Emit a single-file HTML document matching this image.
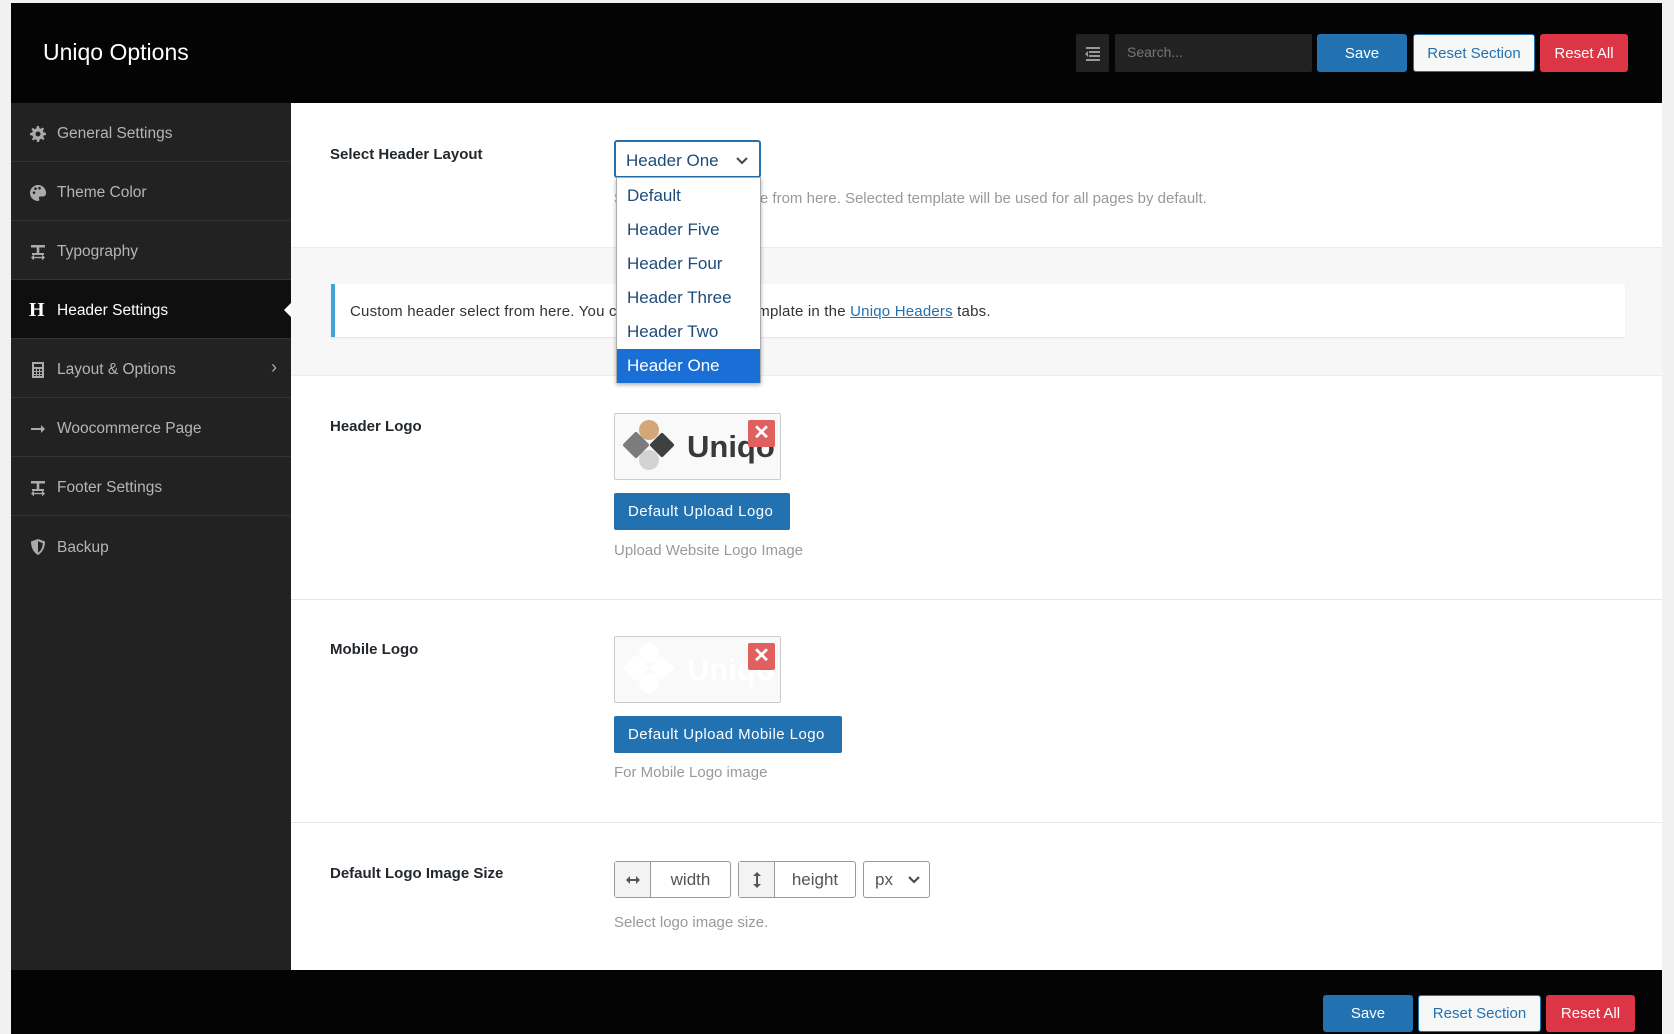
<!DOCTYPE html>
<html><head><meta charset="utf-8"><style>
*{box-sizing:border-box;margin:0;padding:0}
body{width:1674px;height:1034px;background:#f1f1f1;font-family:"Liberation Sans",sans-serif;position:relative;overflow:hidden}
.abs{position:absolute}
.hdr{left:11px;top:3px;width:1651px;height:100px;background:#040404}
.title{left:43px;top:39px;color:#fff;font-size:23px}
.btn{position:absolute;height:37px;border-radius:3px;font-size:15px;display:flex;align-items:center;justify-content:center}
.save{background:#2271b1;color:#fff}
.rs{background:#f6f7f7;color:#2271b1;border:1px solid #2271b1}
.ra{background:#dc3545;color:#fff}
.side{left:11px;top:103px;width:280px;height:867px;background:#222}
.item{position:absolute;left:0;width:280px;height:59px;border-bottom:1px solid #333;color:#b5b5b5;font-size:15.5px;display:flex;align-items:center;padding-left:46px;padding-top:4px}
.item svg{position:absolute;left:19px;top:23px}
.item.act{background:#0f0f0f;color:#fff}
.main{left:291px;top:103px;width:1371px;height:867px;background:#fff}
.lbl{position:absolute;left:330px;font-size:15px;font-weight:bold;color:#23282d}
.help{position:absolute;left:614px;font-size:15px;color:#999}
.sep{position:absolute;left:291px;width:1371px;height:1px;background:#e6e6e6}
.ubtn{position:absolute;left:614px;height:37px;background:#2271b1;color:#fff;font-size:15px;border-radius:2px;display:flex;align-items:center;padding:0 17px 0 14px;letter-spacing:.45px}
.logo{position:absolute;left:614px;width:167px;height:67px;border:1px solid #ccc;border-radius:2px;background:#f9f9f9;overflow:hidden}
.x{position:absolute;left:133px;top:6px;width:27px;height:27px;background:#e06060;border-radius:2px;color:#fff;font-size:20px;font-weight:bold;text-align:center;line-height:27px}
.dd div{height:34px;padding-left:10px;line-height:34px;font-size:17px;color:#1d4b7a}
.ig{position:absolute;top:861px;height:37px;border:1px solid #999;border-radius:3px;display:flex;font-size:17px;color:#555;background:#fff}
.ig .ic{width:36px;background:#f3f3f3;border-right:1px solid #999;display:flex;align-items:center;justify-content:center}
.ig .tx{flex:1;display:flex;align-items:center;justify-content:center}
</style></head><body>
<div class="abs hdr"></div>
<div class="abs title">Uniqo Options</div>
<div class="abs" style="left:1076px;top:34px;width:33px;height:38px;background:#222;border-radius:2px">
<svg width="33" height="38"><g fill="#999"><rect x="10" y="13" width="14" height="2"/><rect x="13" y="17" width="11" height="2"/><rect x="13" y="21" width="11" height="2"/><rect x="10" y="25" width="14" height="2"/><path d="M12 17v6l-3-3z"/></g></svg></div>
<div class="abs" style="left:1115px;top:34px;width:197px;height:38px;background:#222;border-radius:2px;color:#777;font-size:14px;padding:10px 12px">Search...</div>
<div class="btn save" style="left:1317px;top:34px;width:90px;height:38px">Save</div>
<div class="btn rs" style="left:1413px;top:34px;width:122px;height:38px">Reset Section</div>
<div class="btn ra" style="left:1540px;top:34px;width:88px;height:38px">Reset All</div>

<div class="abs side">
<div class="item" style="top:0"><svg width="16" height="16" viewBox="0 0 16 16"><path fill="#aaa" d="M7 0h2l.4 2.2 1.5.6 1.8-1.3 1.4 1.4-1.3 1.8.6 1.5L16 7v2l-2.2.4-.6 1.5 1.3 1.8-1.4 1.4-1.8-1.3-1.5.6L9 16H7l-.4-2.2-1.5-.6-1.8 1.3-1.4-1.4 1.3-1.8-.6-1.5L0 9V7l2.2-.4.6-1.5L1.5 3.3l1.4-1.4 1.8 1.3 1.5-.6zM8 5.5a2.5 2.5 0 100 5 2.5 2.5 0 000-5z"/></svg>General Settings</div>
<div class="item" style="top:59px"><svg width="16" height="16" viewBox="0 0 16 16"><path fill="#aaa" d="M8 0a8 8 0 000 16c1.5 0 1.5-1.5 1-2.5s0-2 1.5-2H13a3 3 0 003-3A8 8 0 008 0zM4 9a1.3 1.3 0 110-2.6A1.3 1.3 0 014 9zm1.5-4a1.3 1.3 0 110-2.6 1.3 1.3 0 010 2.6zm4-.5a1.3 1.3 0 110-2.6 1.3 1.3 0 010 2.6z"/></svg>Theme Color</div>
<div class="item" style="top:118px"><svg width="16" height="16" viewBox="0 0 16 16"><g fill="#aaa"><rect x="1" y="1" width="14" height="2.5"/><rect x="6.7" y="3" width="2.6" height="6"/><rect x="2" y="9" width="12" height="2"/><path d="M1 13.5l3-3v6zM15 13.5l-3-3v6z"/><rect x="3" y="12.8" width="10" height="1.4"/></g></svg>Typography</div>
<div class="item act" style="top:177px"><span style="position:absolute;left:18px;top:19px;font-family:'Liberation Serif',serif;font-weight:bold;font-size:20px;color:#fff">H</span>Header Settings<span style="position:absolute;right:0;top:23px;width:0;height:0;border-top:7px solid transparent;border-bottom:7px solid transparent;border-right:7px solid #fff"></span></div>
<div class="item" style="top:236px"><svg width="16" height="16" viewBox="0 0 16 16"><path fill="#aaa" d="M2 0h12v16H2zm2 2v3h8V2zm0 5v2h2V7zm3 0v2h2V7zm3 0v2h2V7zM4 10v2h2v-2zm3 0v2h2v-2zm3 0v2h2v-2zM4 13v1h2v-1zm3 0v1h2v-1zm3 0v1h2v-1z"/></svg>Layout &amp; Options<span style="position:absolute;right:14px;top:18px;color:#aaa;font-size:18px">›</span></div>
<div class="item" style="top:295px"><svg width="16" height="16" viewBox="0 0 16 16"><path fill="#aaa" d="M1 7h10V4l4 4-4 4V9H1z"/></svg>Woocommerce Page</div>
<div class="item" style="top:354px"><svg width="16" height="16" viewBox="0 0 16 16"><g fill="#aaa"><rect x="1" y="1" width="14" height="2.5"/><rect x="6.7" y="3" width="2.6" height="6"/><rect x="2" y="9" width="12" height="2"/><path d="M1 13.5l3-3v6zM15 13.5l-3-3v6z"/><rect x="3" y="12.8" width="10" height="1.4"/></g></svg>Footer Settings</div>
<div class="item" style="top:413px;border-bottom:none"><svg width="16" height="16" viewBox="0 0 16 16"><path fill="#aaa" d="M8 0l7 2.5c0 6-2.5 11-7 13.5C3.5 13.5 1 8.5 1 2.5z"/><path fill="#222" d="M8 2.2v11.5c3-2 4.6-5.5 4.8-9.6z"/></svg>Backup</div>
</div>

<div class="abs main"></div>
<!-- section 1 -->
<div class="lbl" style="top:146px">Select Header Layout</div>
<div class="help" style="top:190px">Select header template from here. Selected template will be used for all pages by default.</div>
<div class="abs" style="left:291px;top:247px;width:1371px;height:129px;background:#f7f7f7;border-top:1px solid #ececec;border-bottom:1px solid #ececec"></div>
<div class="abs" style="left:331px;top:284px;width:1294px;height:53px;background:#fff;border-left:4px solid #3ea4da;box-shadow:0 1px 1px rgba(0,0,0,.08);font-size:15px;color:#333;padding:19px 0 0 15px;letter-spacing:.2px">Custom header select from here. You can choose header template in the <span style="color:#2271b1;text-decoration:underline">Uniqo Headers</span> tabs.</div>
<!-- section 3 -->
<div class="lbl" style="top:418px">Header Logo</div>
<div class="logo" style="top:413px">
<svg width="70" height="66" style="position:absolute;left:0;top:0"><g stroke-linejoin="round" stroke-width="4"><circle cx="34" cy="16" r="10" fill="#d2a878" stroke="none"/><circle cx="34" cy="46" r="10" fill="#d3d3d3" stroke="none"/><path d="M10 31l11-11 11 11-11 11z" fill="#7c7c7c" stroke="#7c7c7c"/><path d="M47 21l10 10-10 10-10-10z" fill="#3d4140" stroke="#3d4140"/></g></svg>
<span style="position:absolute;left:72px;top:15px;font-size:31px;font-weight:bold;color:#363a3a">Uniqo</span>
<div class="x">✕</div></div>
<div class="ubtn" style="top:493px">Default Upload Logo</div>
<div class="help" style="top:542px">Upload Website Logo Image</div>
<div class="sep" style="top:599px"></div>
<!-- section 4 -->
<div class="lbl" style="top:641px">Mobile Logo</div>
<div class="logo" style="top:636px">
<svg width="70" height="66" style="position:absolute;left:0;top:0"><g fill="#fff" stroke="#fff" stroke-linejoin="round" stroke-width="4"><circle cx="34" cy="16" r="10" stroke="none"/><circle cx="34" cy="46" r="10" stroke="none"/><path d="M10 31l11-11 11 11-11 11z"/><path d="M47 21l10 10-10 10-10-10z"/></g></svg>
<span style="position:absolute;left:72px;top:15px;font-size:31px;font-weight:bold;color:#fff">Uniqo</span>
<div class="x">✕</div></div>
<div class="ubtn" style="top:716px">Default Upload Mobile Logo</div>
<div class="help" style="top:764px">For Mobile Logo image</div>
<div class="sep" style="top:822px"></div>
<!-- section 5 -->
<div class="lbl" style="top:865px">Default Logo Image Size</div>
<div class="ig" style="left:614px;width:117px"><div class="ic"><svg width="16" height="10"><path d="M1 5l4-4v3h6V1l4 4-4 4V6H5v3z" fill="#555"/></svg></div><div class="tx">width</div></div>
<div class="ig" style="left:738px;width:118px"><div class="ic"><svg width="10" height="18"><path d="M5 1l4 4H6v8h3l-4 4-4-4h3V5H1z" fill="#555"/></svg></div><div class="tx">height</div></div>
<div class="ig" style="left:863px;width:67px;align-items:center;padding-left:11px">px<svg width="14" height="10" style="margin-left:14px"><path d="M2 2l5 5 5-5" stroke="#444" stroke-width="2" fill="none"/></svg></div>
<div class="help" style="top:914px">Select logo image size.</div>

<!-- dropdown -->
<div class="abs" style="left:614px;top:140px;width:147px;height:38px;border:2px solid #2271b1;border-radius:3px;background:#fff;font-size:17px;color:#1d4b7a;padding:9px 0 0 10px">Header One<svg width="14" height="10" style="position:absolute;right:10px;top:14px"><path d="M2 2l5 5 5-5" stroke="#444" stroke-width="2" fill="none"/></svg></div>
<div class="abs dd" style="left:616px;top:177px;width:145px;height:206px;background:#fff;border:1px solid #aaa;box-shadow:0 2px 4px rgba(0,0,0,.3);padding-top:1px">
<div>Default</div><div>Header Five</div><div>Header Four</div><div>Header Three</div><div>Header Two</div><div style="background:#1a6fd6;color:#fff">Header One</div></div>

<!-- footer -->
<div class="abs" style="left:11px;top:970px;width:1651px;height:64px;background:#040404"></div>
<div class="btn save" style="left:1323px;top:995px;width:90px">Save</div>
<div class="btn rs" style="left:1418px;top:995px;width:123px">Reset Section</div>
<div class="btn ra" style="left:1546px;top:995px;width:89px">Reset All</div>
</body></html>
